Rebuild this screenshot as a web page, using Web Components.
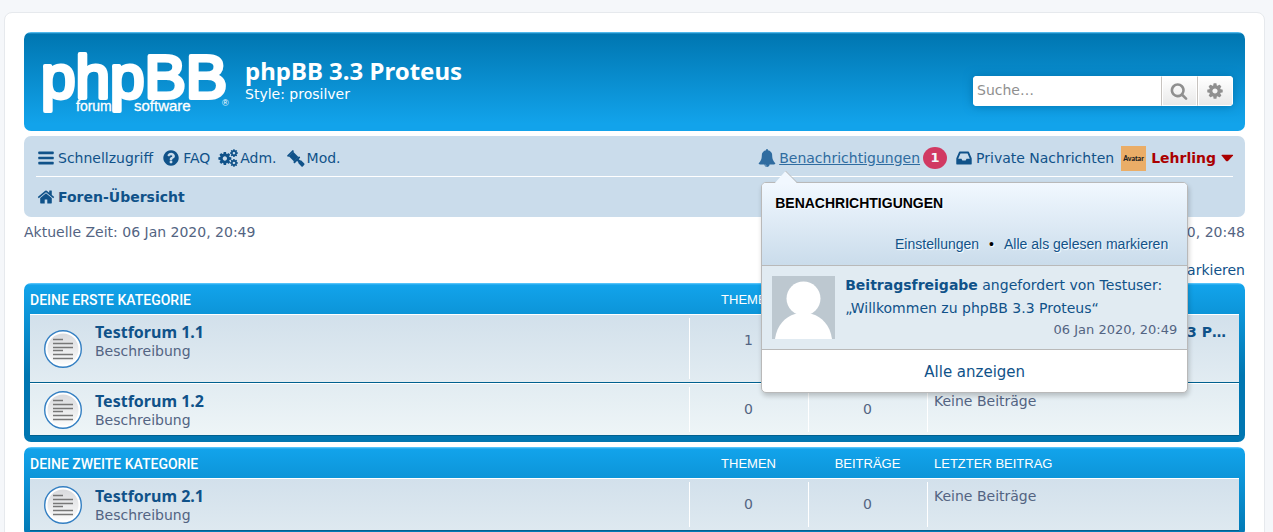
<!DOCTYPE html>
<html lang="de">
<head>
<meta charset="utf-8">
<title>phpBB 3.3 Proteus – Foren-Übersicht</title>
<style>
  html { scrollbar-width: none; background: #f5f7fa; }
  body {
    margin: 0;
    padding: 12px 8px 12px 4px;
    font: 14px/19px "DejaVu Sans", sans-serif;
    color: #536482;
  }
</style>
</head>
<body>
<forum-page>
  <site-header heading="phpBB 3.3 Proteus" tagline="Style: prosilver"></site-header>
  <nav-bar></nav-bar>
  <time-line></time-line>
  <forum-category heading="Deine erste Kategorie" data-key="first"></forum-category>
  <forum-category heading="Deine zweite Kategorie" data-key="second"></forum-category>
</forum-page>

<script>
const define = (name, html, setup) => {
  const template = document.createElement('template');
  template.innerHTML = html;
  customElements.define(name, class extends HTMLElement {
    constructor() {
      super();
      this.attachShadow({ mode: 'open' }).append(template.content.cloneNode(true));
    }
    connectedCallback() { if (setup) setup(this, this.shadowRoot); }
  });
};

const COG = 'M1152 896q0-106-75-181t-181-75-181 75-75 181 75 181 181 75 181-75 75-181zm512-109v222q0 12-8 23t-20 13l-185 28q-19 54-39 91 35 50 107 138 10 12 10 25t-9 23q-27 37-99 108t-94 71q-12 0-26-9l-138-108q-44 23-91 38-16 136-29 186-7 28-36 28h-222q-14 0-24.5-8.5t-11.5-21.5l-28-184q-49-16-90-37l-141 107q-10 9-25 9-14 0-25-11-126-114-165-168-7-10-7-23 0-12 8-23 15-21 51-66.5t54-70.5q-27-50-41-99l-183-27q-13-2-21-12.5t-8-23.5v-222q0-12 8-23t19-13l186-28q14-46 39-92-40-57-107-138-10-12-10-24 0-10 9-23 26-36 98.5-107.5t94.5-71.5q13 0 26 10l138 107q44-23 91-38 16-136 29-186 7-28 36-28h222q14 0 24.5 8.5t11.5 21.5l28 184q49 16 90 37l142-107q9-9 24-9 13 0 25 10 129 119 165 170 7 8 7 22 0 12-8 23-15 21-51 66.5t-54 70.5q26 50 41 98l183 28q13 2 21 12.5t8 23.5z';
const ICONS = {
  bars: '<rect x="128" y="256" width="1536" height="256" rx="64"/><rect x="128" y="768" width="1536" height="256" rx="64"/><rect x="128" y="1280" width="1536" height="256" rx="64"/>',
  search: '<path d="M1216 832q0-185-131.5-316.5t-316.5-131.5-316.5 131.5-131.5 316.5 131.5 316.5 316.5 131.5 316.5-131.5 131.5-316.5zm512 832q0 52-38 90t-90 38q-54 0-90-38l-343-342q-179 124-399 124-143 0-273.5-55.5t-225-150-150-225-55.5-273.5 55.5-273.5 150-225 225-150 273.5-55.5 273.5 55.5 225 150 150 225 55.5 273.5q0 220-124 399l343 343q37 37 37 90z"/>',
  cog: `<path d="${COG}"/>`,
  cogs: `<path transform="translate(-170 190) scale(.84)" d="${COG}"/><path transform="translate(1040 -40) scale(.5)" d="${COG}"/><path transform="translate(1040 940) scale(.5)" d="${COG}"/>`,
  question: '<path d="M1024 1376v-192q0-14-9-23t-23-9h-192q-14 0-23 9t-9 23v192q0 14 9 23t23 9h192q14 0 23-9t9-23zm256-672q0-88-55.5-163t-138.5-116-170-41q-243 0-371 213-15 24 8 42l132 100q7 6 19 6 16 0 25-12 53-68 86-92 34-24 86-24 48 0 85.5 26t37.5 59q0 38-20 61t-68 45q-63 28-115.5 86.5t-52.5 125.5v36q0 14 9 23t23 9h192q14 0 23-9t9-23q0-19 21.5-49.5t54.5-49.5q32-18 49-28.5t46-35 44.5-48 28-60.5 12.5-81zm384 192q0 209-103 385.5t-279.5 279.5-385.5 103-385.5-103-279.5-279.5-103-385.5 103-385.5 279.5-279.5 385.5-103 385.5 103 279.5 279.5 103 385.5z"/>',
  gavel: '<g transform="translate(760 760) rotate(45)"><rect x="-540" y="-420" width="190" height="840" rx="80"/><rect x="-370" y="-310" width="740" height="620"/><rect x="350" y="-420" width="190" height="840" rx="80"/></g><path transform="translate(160 80)" d="M880 1050l170-170 220 180q40-30 90 10l300 300q60 70 0 130l-150 150q-60 60-130 0l-300-300q-50-50-10-100z"/>',
  home: '<path d="M1472 992v480q0 26-19 45t-45 19h-384v-384h-256v384h-384q-26 0-45-19t-19-45v-480q0-1 .5-3t.5-3l575-474 575 474q1 2 1 6zm223-69l-62 74q-8 9-21 11h-3q-13 0-21-7l-692-577-692 577q-12 8-24 7-13-2-21-11l-62-74q-8-10-7-23.5t11-21.5l719-599q32-26 76-26t76 26l244 204v-195q0-14 9-23t23-9h192q14 0 23 9t9 23v408l219 182q10 8 11 21.5t-7 23.5z"/>',
  bell: '<path d="M912 1696q0-16-16-16-59 0-101.5-42.5t-42.5-101.5q0-16-16-16t-16 16q0 73 51.5 124.5t124.5 51.5q16 0 16-16zm816-288q0 52-38 90t-90 38h-448q0 106-75 181t-181 75-181-75-75-181h-448q-52 0-90-38t-38-90q50-42 91-88t85-119.5 74.5-158.5 50-206 19.5-260q0-152 117-282.5t307-158.5q-8-19-8-39 0-40 28-68t68-28 68 28 28 68q0 20-8 39 190 28 307 158.5t117 282.5q0 139 19.5 260t50 206 74.5 158.5 85 119.5 91 88z"/>',
  inbox: '<path d="M1151 960h316q-1-3-2.5-8.5t-2.5-7.5l-212-496h-708l-212 496q-1 3-2.5 8.5t-2.5 7.5h316l95 192h320zm513 30v482q0 26-19 45t-45 19h-1408q-26 0-45-19t-19-45v-482q0-62 25-123l238-552q10-25 36.5-42t52.5-17h832q26 0 52.5 17t36.5 42l238 552q25 61 25 123z"/>',
  caret: '<path d="M430 560h1000q110 0 70 90l-480 520q-120 110-240 0l-420-520q-40-90 70-90z"/>'
};

define('fa-icon', `
<style>
  :host { display: inline-flex; flex: none; width: 20px; justify-content: center; }
  svg { width: 18px; height: 18px; fill: currentColor; overflow: visible; }
</style>
<svg viewBox="0 0 1792 1792" aria-hidden="true"></svg>`,
(host, root) => { root.querySelector('svg').innerHTML = ICONS[host.getAttribute('name')]; });

define('forum-page', `
<style>
  :host { display: block; background: #fff; border: 1px solid #e6e9ed; border-radius: 8px; padding: 19px; }
</style>
<slot></slot>`);

define('search-box', `
<style>
  :host { display: block; }
  form { display: flex; height: 30px; border-radius: 4px; box-shadow: 0 0 10px #0075b0; background: #fff; overflow: hidden; }
  input { width: 188px; box-sizing: border-box; border: 0; padding: 0 4px; font: inherit; color: #333; outline: 0; background: #fff; }
  input::placeholder { color: #8f8f8f; opacity: 1; }
  button { width: 36px; box-sizing: border-box; padding: 0; border: 1px solid #fff; border-left: 1px solid #c7c3bf; background: linear-gradient(#fff, #e9e9e9); color: #8f8f8f; display: flex; align-items: center; justify-content: center; box-shadow: inset 1px 0 #fff; }
</style>
<form role="search" onsubmit="return false">
  <input type="search" placeholder="Suche…" aria-label="Suche">
  <button type="submit" aria-label="Suche"><fa-icon name="search"></fa-icon></button>
  <button type="button" aria-label="Erweiterte Suche"><fa-icon name="cog"></fa-icon></button>
</form>`);

define('site-header', `
<style>
  :host {
    display: flex; align-items: center; gap: 14px; min-height: 99px; box-sizing: border-box;
    padding: 0 12px 0 17px; margin-bottom: 5px; border-radius: 7px; color: #fff;
    background: linear-gradient(#6aceff 0, #0076b1 2px, #12a3eb 92px, #12a3eb 100%);
  }
  .logo { flex: none; width: 190px; height: 66px; display: block; }
  .logo svg { display: block; fill: #fff; stroke: #fff; font-family: "Liberation Sans", Arial, sans-serif; overflow: visible; }
  .titles { flex: 1; }
  h1 { margin: 0; font: bold 24px/24px "Noto Sans", sans-serif; }
  p { margin: 0; line-height: 22px; }
  search-box { margin-top: 18px; }
</style>
<a class="logo" href="#" aria-label="Foren-Übersicht">
  <svg width="190" height="66" viewBox="0 0 190 66">
    <text x="0" y="49" font-size="62" stroke-width="4" stroke-linejoin="round">phpBB</text>
    <text x="35" y="62" font-size="14" stroke-width=".3">forum</text>
    <text x="93" y="62" font-size="15" stroke-width=".3">software</text>
    <text x="181" y="57" font-size="9" stroke="none">®</text>
  </svg>
</a>
<div class="titles"><h1></h1><p></p></div>
<search-box></search-box>`,
(host, root) => {
  root.querySelector('h1').textContent = host.getAttribute('heading');
  root.querySelector('p').textContent = host.getAttribute('tagline');
});

define('nav-item', `
<style>
  :host { display: block; }
  a { display: flex; align-items: center; gap: 2px; color: #105289; text-decoration: none; white-space: nowrap; }
  :host([strong]) a { font-weight: bold; }
  :host([active]) a { color: #2f6ca0; }
  :host([active]) span { text-decoration: underline; }
</style>
<a href="#"><fa-icon></fa-icon><span><slot></slot></span></a>`,
(host, root) => {
  const icon = document.createElement('fa-icon');
  icon.setAttribute('name', host.getAttribute('icon'));
  root.querySelector('fa-icon').replaceWith(icon);
});
</script>
<script>
define('notification-menu', `
<style>
  :host {
    display: block; position: absolute; z-index: 2; left: 4px; top: 35px; width: 427px; box-sizing: border-box;
    border: 1px solid #b9b9b9; border-radius: 5px; background: #fff; color: #536482;
    box-shadow: 1px 3px 5px rgba(0, 0, 0, .2);
  }
  .pointer { position: absolute; left: 12px; top: -13px; }
  header { height: 82px; box-sizing: border-box; padding: 11px 19px 11px 13px; display: flex; flex-direction: column; justify-content: space-between;
    border-radius: 4px 4px 0 0; background: linear-gradient(#f1f8ff, #cadceb); font-family: "Liberation Sans", Arial, sans-serif; text-shadow: 1px 1px 1px #fff; }
  h2 { margin: 0; font-size: 14px; line-height: 19px; color: #000; text-transform: uppercase; }
  .links { display: flex; justify-content: flex-end; gap: 10px; color: #000; }
  a { color: #105289; text-decoration: none; }
  .item { display: flex; gap: 10px; padding: 10px; border: solid #b9b9b9; border-width: 1px 0; background: #e1ebf2; }
  .item svg { flex: none; display: block; }
  .text { flex: 1; height: 63px; line-height: 23px; margin-top: -2px; }
  .text a { display: block; white-space: nowrap; }
  time { display: block; text-align: right; font-size: 13px; line-height: 20px; }
  footer { display: grid; place-items: center; height: 42px; }
  footer a { font-size: 15px; line-height: 20px; padding-top: 2px; }
</style>
<svg class="pointer" width="24" height="14" viewBox="0 0 24 14"><path d="M0 14L11.500 1L24 14z" fill="#f1f8ff"/><path d="M11.500 1L23.500 13" fill="none" stroke="#b9b9b9"/></svg>
<header>
  <h2>Benachrichtigungen</h2>
  <div class="links"><a href="#">Einstellungen</a><span>•</span><a href="#">Alle als gelesen markieren</a></div>
</header>
<div class="item">
  <svg width="63" height="63" viewBox="0 0 63 63"><rect width="63" height="63" fill="#bdc8d0"/><ellipse cx="31.500" cy="22.500" rx="17" ry="17" fill="#fff"/><path d="M3 63c2-14 10-22 20-25h17c10 3 18 11 20 25z" fill="#fff"/></svg>
  <div class="text"><a href="#"><b>Beitragsfreigabe</b> angefordert von Testuser:<br>„Willkommen zu phpBB 3.3 Proteus“</a><time>06 Jan 2020, 20:49</time></div>
</div>
<footer><a href="#">Alle anzeigen</a></footer>`);

define('nav-bar', `
<style>
  :host { display: block; padding: 0 12px; border-radius: 7px; background: #cadceb; }
  .row { display: flex; align-items: center; justify-content: space-between; min-height: 40px; }
  .main { padding-top: 4px; min-height: 36px; border-bottom: 1px solid #fff; }
  .group { display: flex; align-items: center; gap: 8px; }
  .group.end { gap: 7px; }
  .notify { position: relative; display: flex; align-items: center; gap: 3px; }
  .badge { width: 24px; height: 22px; border-radius: 50%; background: #d31141; opacity: .8; color: #fff; font: bold 13px/22px "DejaVu Sans", sans-serif; text-align: center; }
  .user { display: flex; align-items: center; gap: 5px; color: #a00; font-weight: bold; text-decoration: none; }
  .user fa-icon { width: 12px; }
  .user svg { display: block; }
</style>
<nav class="row main">
  <div class="group">
    <nav-item icon="bars">Schnellzugriff</nav-item>
    <nav-item icon="question">FAQ</nav-item>
    <nav-item icon="cogs">Adm.</nav-item>
    <nav-item icon="gavel">Mod.</nav-item>
  </div>
  <div class="group end">
    <div class="notify">
      <nav-item icon="bell" active>Benachrichtigungen</nav-item>
      <span class="badge">1</span>
      <notification-menu></notification-menu>
    </div>
    <nav-item icon="inbox">Private Nachrichten</nav-item>
    <a class="user" href="#">
      <svg width="25" height="25" viewBox="0 0 25 25"><rect width="25" height="25" fill="#eaad67"/><text x="12.500" y="15" text-anchor="middle" font-family="Lato, sans-serif" font-weight="900" font-size="7" fill="#222">Avatar</text></svg>
      Lehrling<fa-icon name="caret"></fa-icon>
    </a>
  </div>
</nav>
<nav class="row"><nav-item icon="home" strong>Foren-Übersicht</nav-item></nav>`);

define('time-line', `
<style>
  :host { display: block; margin: 6px 0 3px; }
  p { margin: 0; display: flex; justify-content: space-between; }
  p + p { margin-top: 19px; justify-content: flex-end; }
  a { color: #105289; text-decoration: none; }
</style>
<p><span>Aktuelle Zeit: 06 Jan 2020, 20:49</span><span>Letzter Besuch: 06 Jan 2020, 20:48</span></p>
<p><a href="#">Alle Foren als gelesen markieren</a></p>`);

const FORUMS = {
  first: [
    { name: 'Testforum 1.1', topics: 1, posts: 1, last: 'Re: Willkommen zu phpBB 3.3 P…' },
    { name: 'Testforum 1.2', topics: 0, posts: 0 }
  ],
  second: [{ name: 'Testforum 2.1', topics: 0, posts: 0 }]
};

const FORUM_ICON = `<svg width="38" height="38" viewBox="0 0 38 38" aria-hidden="true">
  <defs><linearGradient id="g" x1="0" y1="0" x2="0" y2="1"><stop offset="0" stop-color="#d9dadd"/><stop offset="1" stop-color="#fbfbfb"/></linearGradient></defs>
  <circle cx="19" cy="19" r="18.300" fill="#fff" stroke="#3580c3" stroke-width="1.400"/>
  <circle cx="19" cy="19" r="15.500" fill="url(#g)"/>
  <path d="M9 9.500h10M9 13.500h20M9 17.500h20M9 20.500h10M9 24.500h20M9 28.500h20" stroke="#777" stroke-width="1.300"/></svg>`;

define('forum-category', `
<style>
  :host { display: block; margin-bottom: 5px; padding: 0 6px 6px; border-radius: 7px;
    background: linear-gradient(#6aceff 0, #12a3eb 2px, #0076b1 92px, #0076b1 100%); }
  table { width: 100%; table-layout: fixed; border-collapse: separate; border-spacing: 0; }
  th { height: 31px; padding: 2px 0 0; box-sizing: border-box; color: #fff; font: 13px/16px "Liberation Sans", Arial, sans-serif; text-transform: uppercase; text-align: center; }
  th:first-child { text-align: left; font: 500 14px/16px Roboto, sans-serif; }
  th:last-child, td:last-child { text-align: left; padding-left: 7px; }
  .count { width: 119px; }
  .last { width: 312px; }
  tbody { background: linear-gradient(#d2e0eb, #eef5f7 122px); }
  td { box-sizing: border-box; height: 53px; padding: 0; vertical-align: top; border-top: 1px solid #fff; border-bottom: 1px solid #00608f; }
  tr.tall td { height: 69px; }
  td + td { background: linear-gradient(#fff, #fff) 0 center / 1px calc(100% - 6px) no-repeat; }
  .name { display: grid; grid-template-columns: 38px 1fr; column-gap: 13px; padding-left: 14px; }
  .name svg { align-self: center; display: block; }
  .name > div { padding-top: 7px; }
  .name { height: 51px; }
  .tall .name { height: 67px; }
  .name a { display: block; font: bold 16px/20px "Noto Sans", sans-serif; }
  .name p { margin: 0; line-height: 18px; }
  .number { padding-top: 16px; text-align: center; }
  .lastpost { padding: 8px 13px 0 0; }
  .lastpost a { display: block; font-weight: bold; text-align: right; white-space: nowrap; }
  a { color: #105289; text-decoration: none; }
</style>
<table>
  <thead><tr><th scope="col"></th><th scope="col" class="count">Themen</th><th scope="col" class="count">Beiträge</th><th scope="col" class="last">Letzter Beitrag</th></tr></thead>
  <tbody></tbody>
</table>`,
(host, root) => {
  root.querySelector('th').textContent = host.getAttribute('heading');
  root.querySelector('tbody').innerHTML = FORUMS[host.dataset.key].map(f => `
    <tr class="${f.last ? 'tall' : ''}">
      <td><div class="name">${FORUM_ICON}<div><a href="#">${f.name}</a><p>Beschreibung</p></div></div></td>
      <td><div class="number">${f.topics}</div></td>
      <td><div class="number">${f.posts}</div></td>
      <td><div class="lastpost">${f.last ? `<a href="#">${f.last}</a>` : 'Keine Beiträge'}</div></td>
    </tr>`).join('');
});
</script>
</body>
</html>
